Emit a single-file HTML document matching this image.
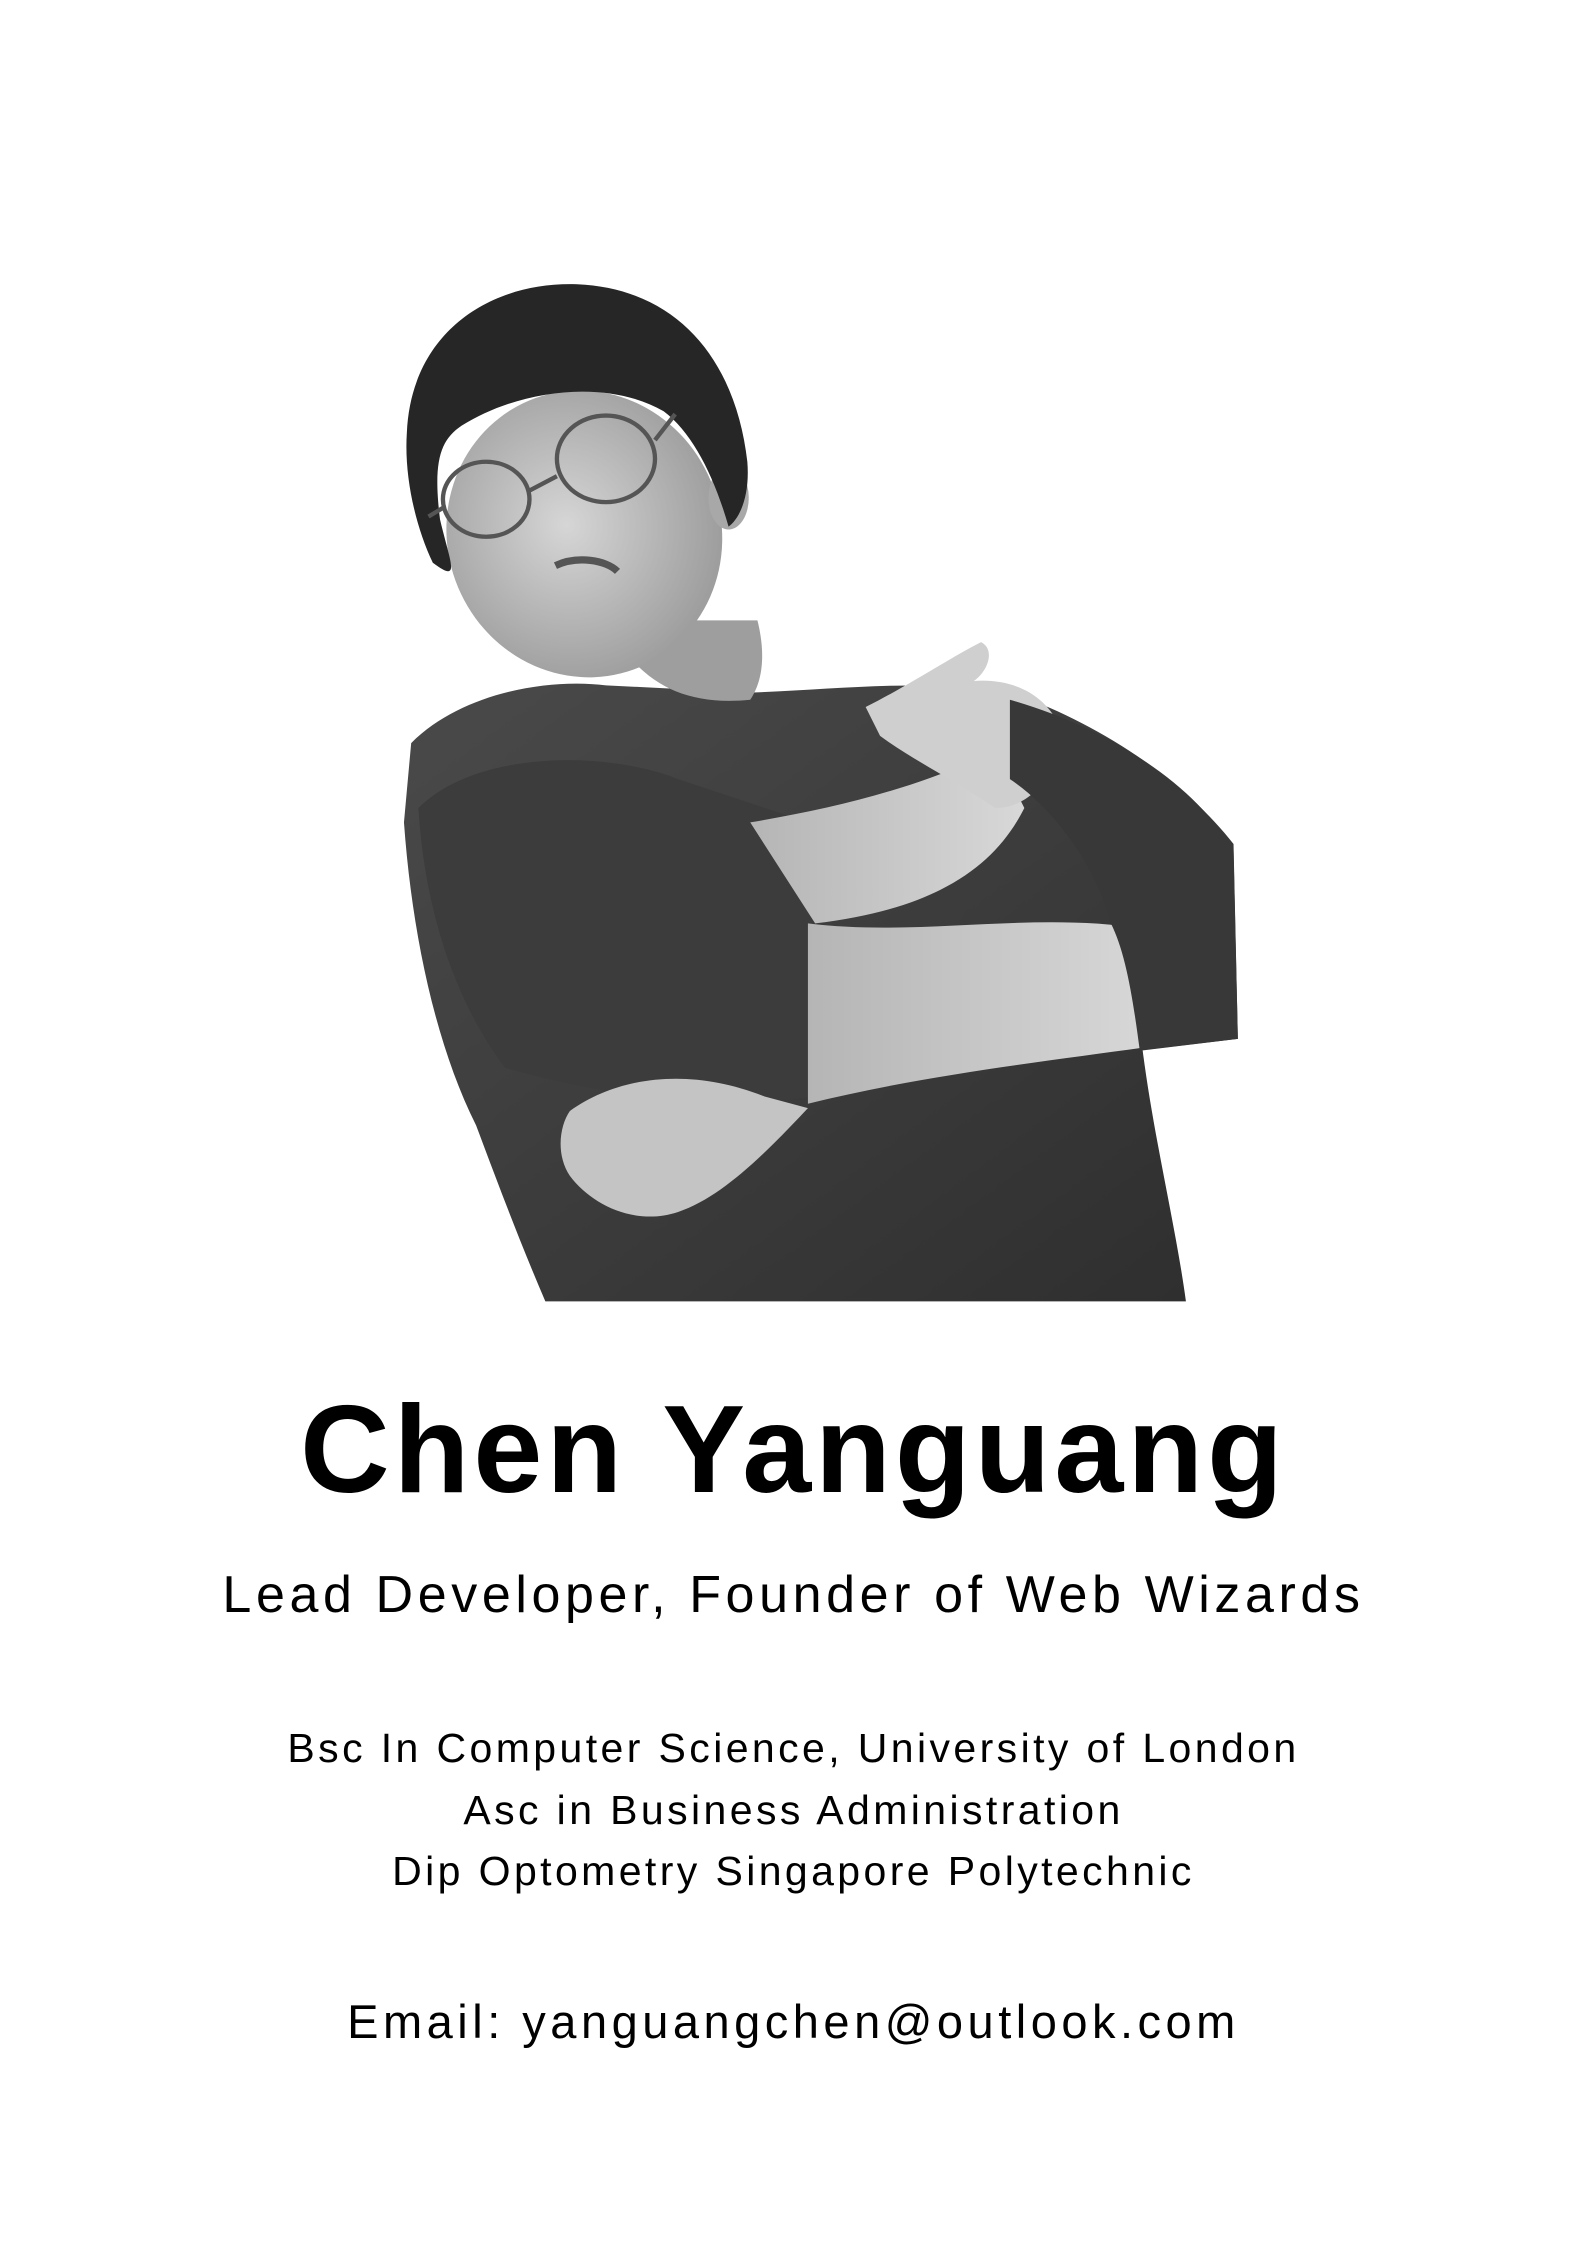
<!DOCTYPE html>
<html><head><meta charset="utf-8"><style>
html,body{margin:0;padding:0;background:#fff;}
body{width:1587px;height:2245px;position:relative;overflow:hidden;font-family:"Liberation Sans",sans-serif;color:#000;}
.t{position:absolute;left:0;width:1587px;text-align:center;white-space:nowrap;}
svg{position:absolute;left:0;top:0;}
</style></head><body>
<svg width="1587" height="2245" viewBox="0 0 1100 1556">
<defs>
<linearGradient id="sw" x1="0" y1="0" x2="1" y2="1"><stop offset="0" stop-color="#4a4a4a"/><stop offset="1" stop-color="#2e2e2e"/></linearGradient>
<radialGradient id="face" cx="0.45" cy="0.45" r="0.6"><stop offset="0" stop-color="#d6d6d6"/><stop offset="1" stop-color="#9a9a9a"/></radialGradient>
<linearGradient id="arm" x1="0" y1="0" x2="1" y2="0"><stop offset="0" stop-color="#b5b5b5"/><stop offset="1" stop-color="#d8d8d8"/></linearGradient>
</defs>
<path d="M285,515 C320,480 380,470 420,475 L520,480 C580,478 640,470 700,480 C760,500 820,540 855,585 L858,720 L792,728 C800,790 815,850 822,902 L378,902 C360,860 345,820 330,780 C300,720 285,640 280,570 Z" fill="url(#sw)"/>
<path d="M420,430 C440,470 470,490 520,485 C530,470 530,450 525,430 Z" fill="#9e9e9e"/>
<ellipse cx="405" cy="370" rx="95" ry="100" fill="url(#face)" transform="rotate(-20 405 370)"/>
<ellipse cx="505" cy="345" rx="14" ry="22" fill="#a8a8a8"/>
<path d="M282,300 C285,230 340,195 400,197 C470,200 510,250 518,320 C520,345 512,360 505,365 C495,330 480,300 460,285 C420,262 360,270 320,295 C305,305 300,320 305,360 C312,390 320,405 300,390 C288,365 280,330 282,300 Z" fill="#262626"/>
<g fill="none" stroke="#555" stroke-width="3">
<ellipse cx="337" cy="346" rx="30" ry="26"/>
<ellipse cx="420" cy="318" rx="34" ry="30"/>
<path d="M367,340 L386,330 M454,305 L468,287 M307,352 L297,358"/>
</g>
<path d="M385,392 C400,385 420,388 428,396" stroke="#555" stroke-width="5" fill="none"/>
<path d="M290,560 C330,520 420,520 470,540 L560,570 C575,620 575,670 565,760 C500,770 420,760 350,740 C320,700 295,640 290,560 Z" fill="#3c3c3c"/>
<path d="M520,570 C580,560 640,545 690,520 L710,560 C690,600 650,630 565,640 Z" fill="url(#arm)"/>
<path d="M600,490 C630,475 660,455 680,445 C690,450 685,465 675,472 C700,470 725,480 735,505 C735,535 715,560 690,560 C660,540 630,525 610,510 Z" fill="#cfcfcf"/>
<path d="M560,640 C640,650 720,630 800,645 L800,725 C730,735 640,745 560,765 Z" fill="url(#arm)"/>
<path d="M700,485 C770,505 830,545 855,590 L858,720 L790,728 C785,690 780,660 770,640 C760,600 730,560 700,540 Z" fill="#383838"/>
<path d="M395,770 C430,745 480,740 530,760 L560,768 C530,800 500,830 470,840 C440,850 410,835 395,815 C385,800 388,780 395,770 Z" fill="#c4c4c4"/>
</svg>
<div class="t" style="top:1375px;font-size:124px;font-weight:bold;letter-spacing:4px;line-height:150px;">Chen Yanguang</div>
<div class="t" style="top:1562px;font-size:52px;line-height:66px;letter-spacing:4.6px;">Lead Developer, Founder of Web Wizards</div>
<div class="t" style="top:1718px;font-size:41px;line-height:61.5px;letter-spacing:3.4px;">Bsc In Computer Science, University of London<br>Asc in Business Administration<br>Dip Optometry Singapore Polytechnic</div>
<div class="t" style="top:1992px;font-size:47px;line-height:60px;letter-spacing:4.5px;">Email: yanguangchen@outlook.com</div>
</body></html>
